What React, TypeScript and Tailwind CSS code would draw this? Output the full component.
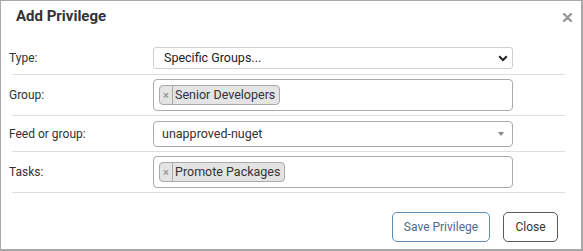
import React from "react";

function Chip({ text }: { text: string }) {
  return (
    <div className="flex h-[20px] items-stretch rounded-[4px] border border-[#aaa] bg-[#e4e4e4] text-[#333]">
      <span className="flex w-[13px] items-center justify-center border-r border-[#aaa] text-[11px] font-bold leading-none text-[#999]">
        ×
      </span>
      <span className="flex items-center pl-[2px] pr-[4px] text-[12.5px] leading-none">{text}</span>
    </div>
  );
}

function Row({ label, children }: { label: string; children: React.ReactNode }) {
  return (
    <div className="flex items-center">
      <div className="w-[144px] text-[12px] text-[#333]">{label}</div>
      <div className="w-[360px]">{children}</div>
    </div>
  );
}

function Sep() {
  return <div className="ml-[3px] mr-[4px] h-px bg-[#ddd]" />;
}

export default function App() {
  return (
    <div
      className="relative flex h-[251px] w-[583px] flex-col border-l border-t border-r-2 border-b-2 border-[#a8a8a8] bg-white"
      style={{ fontFamily: "Roboto, 'Liberation Sans', sans-serif" }}
    >
      <div className="flex h-[41px] items-start justify-between">
        <div className="pl-[15px] pt-[5px] text-[15px] font-bold leading-[20px] text-[#333]">Add Privilege</div>
        <svg className="mr-[9px] mt-[12px]" width="9" height="9" viewBox="0 0 9 9">
          <path d="M1 1 L8 8 M8 1 L1 8" stroke="#999" strokeWidth="2.4" strokeLinecap="round" />
        </svg>
      </div>
      <div className="ml-[8px] mr-[12px] flex flex-col">
        <div className="pt-[5px] pb-[5px]">
          <Row label="Type:">
            <div className="flex h-[22px] items-center justify-between rounded-[3px] border border-[#cfcfcf] pl-[10px] pr-[3px] text-[12.5px] text-[#222]">
              <span>Specific Groups...</span>
              <svg width="10" height="7" viewBox="0 0 10 7" className="mr-[1px]">
                <path d="M1.2 1.2 L5 5 L8.8 1.2" stroke="#222" strokeWidth="2" fill="none" />
              </svg>
            </div>
          </Row>
        </div>
        <Sep />
        <div className="pt-[4px] pb-[4px]">
          <Row label="Group:">
            <div className="flex h-[32px] items-center rounded-[4px] border border-[#aaa] pl-[5px]">
              <Chip text="Senior Developers" />
            </div>
          </Row>
        </div>
        <Sep />
        <div className="pt-[5px] pb-[4px]">
          <Row label="Feed or group:">
            <div className="flex h-[26px] items-center justify-between rounded-[4px] border border-[#aaa] pl-[8px] pr-[8px] text-[12.5px] text-[#333]">
              <span>unapproved-nuget</span>
              <svg width="6" height="4" viewBox="0 0 6 4">
                <path d="M0 0 L6 0 L3 4 Z" fill="#888" />
              </svg>
            </div>
          </Row>
        </div>
        <Sep />
        <div className="pt-[4px] pb-[4px]">
          <Row label="Tasks:">
            <div className="flex h-[32px] items-center rounded-[4px] border border-[#aaa] pl-[5px]">
              <Chip text="Promote Packages" />
            </div>
          </Row>
        </div>
        <Sep />
      </div>
      <div className="mt-[19px] flex justify-end gap-[13px] pr-[23px]">
        <button className="flex h-[30px] w-[98px] items-center justify-center rounded-[5px] border border-[#5f8db8] text-[12px] text-[#4c6b8a]">
          Save Privilege
        </button>
        <button className="flex h-[30px] w-[55px] items-center justify-center rounded-[5px] border border-[#5a5a5a] text-[12px] text-[#333]">
          Close
        </button>
      </div>
    </div>
  );
}
